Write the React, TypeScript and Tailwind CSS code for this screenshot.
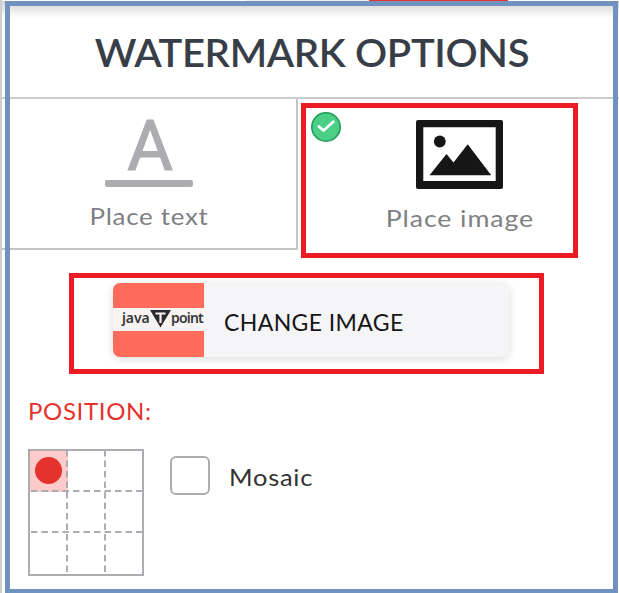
import React from "react";

function PictureIcon() {
  return (
    <svg width="87" height="69" viewBox="0 0 87 69" className="ml-[2px] block" fill="#161616">
      <path fillRule="evenodd" d="M2 0H85Q87 0 87 2V67Q87 69 85 69H2Q0 69 0 67V2Q0 0 2 0ZM7.300 7.300V61H79.700V7.300Z" />
      <circle cx="23.800" cy="21.500" r="5.900" />
      <path d="M13.500 55.300 30.500 34 37.500 42.500 51.700 24.300 75.200 55.300Z" />
    </svg>
  );
}

function CheckBadge() {
  return (
    <svg width="30" height="30" viewBox="0 0 30 30" className="absolute left-[311px] top-[112px]">
      <circle cx="15" cy="15" r="14.200" fill="#4bce86" stroke="#229c5a" strokeWidth="1.600" />
      <path d="M7 13.800 12.500 18.500 23.200 9" fill="none" stroke="#fff" strokeWidth="2.700" />
    </svg>
  );
}

function Thumbnail() {
  return (
    <div className="flex h-full w-[91px] flex-col rounded-l-[7px] bg-[#ff6b5a] pt-[25px]">
      <div className="flex h-[23px] w-full items-start bg-[#f7f3f3] pl-[9px] font-['Noto_Sans',sans-serif] text-[14px] font-semibold leading-[19px] text-[#38383a]">
        <span className="w-[28px] whitespace-nowrap tracking-[-0.1px]">java</span>
        <svg width="21" height="18" viewBox="0 0 21 18" className="mt-[2px] shrink-0">
          <path d="M0 0H21L10.500 17.500Z" fill="#2b2b2d" />
          <path d="M5.500 3.500H15.500M10.500 3.500V13" stroke="#f7f3f3" strokeWidth="2.200" />
        </svg>
        <span className="whitespace-nowrap tracking-[-0.8px]">point</span>
      </div>
    </div>
  );
}

function PositionGrid() {
  return (
    <div className="grid h-[127px] w-[116px] grid-cols-[38px_38px_36px] grid-rows-[41px_41px_41px] border-2 border-[#adacb1]">
      <div className="col-start-1 row-start-1 flex items-center justify-center bg-[#ffcaca]">
        <div className="mb-[2px] mr-[2px] h-[27px] w-[27px] rounded-full bg-[#e5322d]" />
      </div>
      <svg width="112" height="123" viewBox="0 0 112 123" className="col-start-1 row-start-1" stroke="#adacb1" strokeWidth="2" fill="none">
        <path d="M37 0V123M75 0V123" strokeDasharray="6.500 4" strokeDashoffset="1" />
        <path d="M1 40H112M1 81H112" strokeDasharray="6.500 4" />
      </svg>
    </div>
  );
}

export default function App() {
  return (
    <div className="relative h-[593px] w-[619px] overflow-hidden bg-white font-[Lato,sans-serif]">
      <div className="flex h-full flex-col border-l-2 border-[#cfcfcf]">
        <div className="flex h-px shrink-0 bg-white">
          <div className="ml-[244px] w-[123px] bg-[#f1ede8]" />
          <div className="w-[139px] bg-[#e5322d]" />
        </div>
        <header className="flex h-[98px] shrink-0 items-center justify-center border-b-2 border-[#cccccc] bg-linear-to-b from-[#d2d2d4] to-white to-[17px] pt-[7px]">
          <h1 className="ml-[2px] scale-x-[1.025] whitespace-nowrap text-[39px] font-semibold leading-none tracking-[-0.35px] text-[#383e48]">WATERMARK OPTIONS</h1>
        </header>
        <nav className="flex h-[151px] shrink-0">
          <div className="flex w-[296px] flex-col items-center border-b-2 border-r-2 border-[#c4c3c5] pt-[12px]">
            <div className="ml-[2px] h-[69px] font-[Roboto,sans-serif] text-[70px] font-normal leading-[70px] text-[#adacb1] [-webkit-text-stroke:1.2px_#adacb1]">A</div>
            <div className="h-[7px] w-[88px] rounded-[2px] bg-[#adacb1]" />
            <div className="mt-[15px] scale-x-[1.08] whitespace-nowrap text-[24px] leading-[28px] tracking-[0.65px] text-[#808083]">Place text</div>
          </div>
          <div className="ml-[3px] flex w-[315px] flex-col items-center pt-[21px]">
            <PictureIcon />
            <div className="ml-[3px] mt-[15px] scale-x-[1.11] whitespace-nowrap text-[24px] leading-[28px] tracking-[0.85px] text-[#808083]">Place image</div>
          </div>
        </nav>
        <button className="ml-[111px] mt-[33px] flex h-[74px] w-[396px] shrink-0 items-center rounded-[7px] bg-[#f5f5f8] text-left shadow-[0_2px_10px_rgba(0,0,0,0.14)]">
          <Thumbnail />
          <span className="ml-[20px] mt-[4px] whitespace-nowrap text-[23px] leading-none tracking-[0.38px] text-[#161616]">CHANGE IMAGE</span>
        </button>
        <div className="ml-[26px] mt-[40px] whitespace-nowrap text-[24px] leading-[28px] tracking-[0.65px] text-[#e5322d]">POSITION:</div>
        <div className="ml-[26px] mt-[24px] flex items-start">
          <PositionGrid />
          <div className="ml-[26px] mt-[7px] h-[39px] w-[40px] rounded-[6px] border-2 border-[#adacb1]" />
          <span className="ml-[19px] mt-[14px] origin-left scale-x-[1.06] whitespace-nowrap text-[24px] leading-[28px] tracking-[0.7px] text-[#333]">Mosaic</span>
        </div>
      </div>
      <CheckBadge />
      <div className="absolute left-[5px] top-px h-[592px] w-[613px] border-[5px] border-b-4 border-[#6f92bf]" />
      <div className="absolute left-[301px] top-[103px] h-[155px] w-[277px] border-[5px] border-[#ed1c24]" />
      <div className="absolute left-[69px] top-[273px] h-[101px] w-[475px] border-[5px] border-[#ed1c24]" />
    </div>
  );
}
